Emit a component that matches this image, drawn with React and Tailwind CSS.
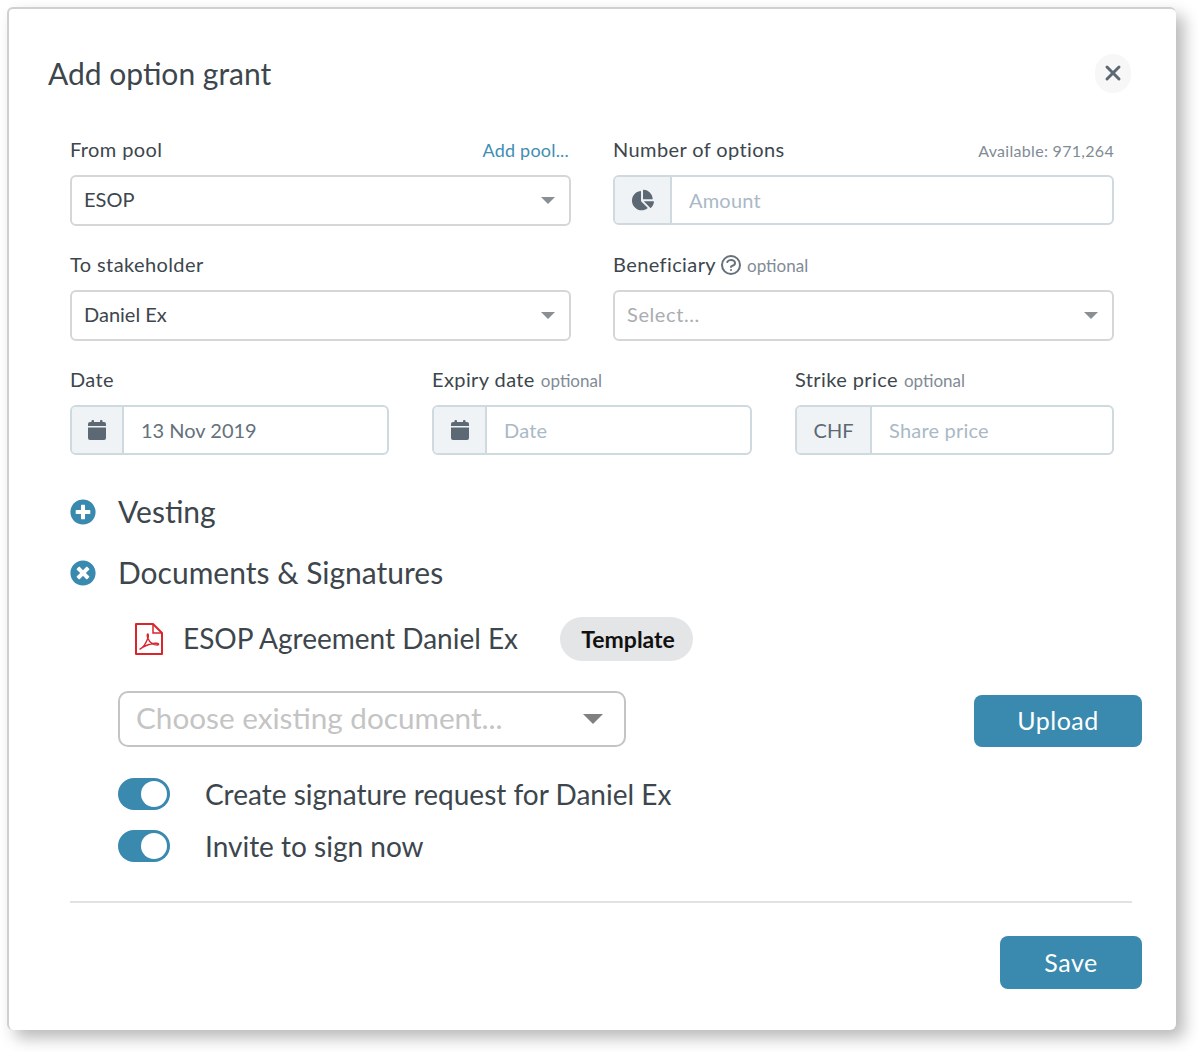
import { FaChartPie, FaPlusCircle, FaTimesCircle } from "react-icons/fa"
import { HiOutlineQuestionMarkCircle } from "react-icons/hi"
import { X } from "lucide-react"

const ui = "font-['Lato',sans-serif]"

function Caret({ big }) {
  return big ? (
    <span className="w-0 h-0 border-x-[10px] border-x-transparent border-t-[10px] border-t-[#808080]" />
  ) : (
    <span className="w-0 h-0 border-x-[7px] border-x-transparent border-t-[7px] border-t-[#8a8f94]" />
  )
}

function CalendarIcon() {
  return (
    <svg width="18" height="20" viewBox="0 0 18 20" fill="currentColor">
      <rect x="3.5" y="0" width="2.5" height="4" rx="1" />
      <rect x="12" y="0" width="2.5" height="4" rx="1" />
      <path d="M0 4a2 2 0 0 1 2-2h14a2 2 0 0 1 2 2v2H0zM0 7.5h18V18a2 2 0 0 1-2 2H2a2 2 0 0 1-2-2z" />
    </svg>
  )
}

function PdfIcon() {
  return (
    <svg width="28" height="32" viewBox="0 0 28 32" fill="none" stroke="#d9262c" strokeWidth="2" className="shrink-0">
      <path d="M1 1H18L27 10V31H1Z" strokeLinejoin="round" />
      <path d="M18 1V10H27" strokeWidth="1.5" />
      <path
        d="M5 26C8 25 11 20 13 15C13.5 13 13.5 11 12.8 11C12 11 12 13.5 13 15.5C14.5 19 18 22 22.5 22C24 22 24 20.5 22 20.3C18 20 10 22 5 26Z"
        strokeWidth="1.4"
        strokeLinejoin="round"
      />
    </svg>
  )
}

function Field({ label, extra, children }) {
  return (
    <div>
      <div className="flex items-baseline justify-between h-[24px] mb-[14px] text-[20px] tracking-[0.4px] leading-[24px] text-[#3d464d]">
        <div className="flex items-baseline">{label}</div>
        {extra}
      </div>
      {children}
    </div>
  )
}

function Optional({ tight }) {
  return <span className={`${tight ? "ml-[4px]" : "ml-[6px]"} text-[17px] tracking-normal text-[#7f8b96]`}>optional</span>
}

function SelectBox({ value, placeholder }) {
  return (
    <div className="flex items-center justify-between h-[51px] pl-[12px] pr-[14px] bg-white border-2 border-[#d4d6d8] rounded-[6px] text-[20px]">
      <span className={`pb-[3px] ${placeholder ? "text-[#a9adb1] tracking-[0.6px]" : "text-[#3d464d]"}`}>{value || placeholder}</span>
      <Caret />
    </div>
  )
}

function AddonInput({ addon, addonWidth, value, placeholder }) {
  return (
    <div className="flex h-[50px] bg-white border-2 border-[#cfd9e0] rounded-[6px] overflow-hidden text-[20px]">
      <div className={`flex items-center justify-center shrink-0 bg-[#f0f3f6] border-r-2 border-[#cfd9e0] text-[#5c6873] ${addonWidth}`}>
        {addon}
      </div>
      <div className={`flex items-center pl-[17px] ${placeholder ? "text-[#a9b9c6] tracking-[0.2px]" : "text-[#66717b]"}`}>
        {value || placeholder}
      </div>
    </div>
  )
}

function Toggle() {
  return (
    <div className="flex items-center justify-end w-[52px] h-[32px] pr-[3px] rounded-full bg-[#3a89ae]">
      <div className="w-[26px] h-[26px] rounded-full bg-white" />
    </div>
  )
}

export default function App() {
  return (
    <div className={`${ui} w-[1198px] h-[1052px] pt-[7px] pl-[7px] bg-white`}>
      <div className="w-[1169px] h-[1023px] bg-white border-2 border-[#d0d0d0] border-b-0 border-r-0 rounded-[6px] shadow-[8px_8px_16px_rgba(0,0,0,0.28)] pt-[44px] pl-[39px]">
        <div className="flex items-center justify-between pr-[45px] h-[40px]">
          <h1 className="text-[30px] leading-[40px] text-[#3d464d] font-normal">Add option grant</h1>
          <div className="flex items-center justify-center w-[36px] h-[39px] rounded-full bg-[#f7f7f7] text-[#5c6873]">
            <X size={24} strokeWidth={3} />
          </div>
        </div>

        <div className="pl-[22px] w-[1066px] pt-[44px]">
          <div className="grid grid-cols-[501px_501px] gap-x-[42px]">
            <Field
              label="From pool"
              extra={<span className="text-[18px] tracking-[0.2px] text-[#3f8eb3] pr-[2px]">Add pool...</span>}
            >
              <SelectBox value="ESOP" />
            </Field>
            <Field
              label="Number of options"
              extra={<span className="text-[16px] tracking-[0.3px] text-[#7f8b96]">Available: 971,264</span>}
            >
              <AddonInput addon={<FaChartPie size={22} />} addonWidth="w-[57px]" placeholder="Amount" />
            </Field>
          </div>

          <div className="grid grid-cols-[501px_501px] gap-x-[42px] mt-[26px]">
            <Field label="To stakeholder">
              <SelectBox value="Daniel Ex" />
            </Field>
            <Field
              label={
                <>
                  Beneficiary
                  <HiOutlineQuestionMarkCircle size={24} className="ml-[3px] self-center text-[#66717b]" />
                  <Optional tight />
                </>
              }
            >
              <SelectBox placeholder="Select..." />
            </Field>
          </div>

          <div className="grid grid-cols-[319px_320px_319px] gap-x-[43px] mt-[26px]">
            <Field label="Date">
              <AddonInput addon={<CalendarIcon />} addonWidth="w-[52px]" value="13 Nov 2019" />
            </Field>
            <Field label={<>Expiry date<Optional /></>}>
              <AddonInput addon={<CalendarIcon />} addonWidth="w-[53px]" placeholder="Date" />
            </Field>
            <Field label={<>Strike price<Optional /></>}>
              <AddonInput addon="CHF" addonWidth="w-[75px]" placeholder="Share price" />
            </Field>
          </div>

          <div className="flex items-center h-[40px] mt-[36px] text-[30px] text-[#3d464d]">
            <FaPlusCircle size={26} className="text-[#3a89ae] mt-[2px]" />
            <span className="ml-[22px]">Vesting</span>
          </div>
          <div className="flex items-center h-[40px] mt-[21px] text-[30px] text-[#3d464d]">
            <FaTimesCircle size={26} className="text-[#3a89ae] mt-[2px]" />
            <span className="ml-[22px]">Documents &amp; Signatures</span>
          </div>

          <div className="flex items-center h-[44px] mt-[25px] ml-[65px]">
            <PdfIcon />
            <span className="ml-[20px] pb-[2px] text-[28px] text-[#3d464d]">ESOP Agreement Daniel Ex</span>
            <span className="flex items-center justify-center ml-[42px] pl-[3px] w-[133px] h-[44px] rounded-full bg-[#e4e5e7] text-[23px] font-bold text-[#111]">
              Template
            </span>
          </div>

          <div className="flex items-start justify-between mt-[30px] ml-[48px] w-[1024px]">
            <div className="flex items-center justify-between w-[508px] h-[56px] pl-[16px] pr-[21px] border-2 border-[#c4c4c4] rounded-[10px]">
              <span className="pb-[2px] text-[29.7px] text-[#c4c4c4]">Choose existing document...</span>
              <Caret big />
            </div>
            <button className="mt-[4px] w-[168px] h-[52px] rounded-[8px] bg-[#3a89ae] text-white text-[25px] tracking-[0.5px]">
              Upload
            </button>
          </div>

          <div className="flex items-center h-[32px] mt-[31px] ml-[48px]">
            <Toggle />
            <span className="ml-[35px] text-[28px] text-[#3d464d]">Create signature request for Daniel Ex</span>
          </div>
          <div className="flex items-center h-[32px] mt-[20px] ml-[48px]">
            <Toggle />
            <span className="ml-[35px] text-[28px] text-[#3d464d]">Invite to sign now</span>
          </div>

          <div className="h-[2px] mt-[39px] bg-[#e2e2e2] w-[1062px]" />

          <div className="flex justify-end w-[1072px] mt-[33px]">
            <button className="w-[142px] h-[53px] rounded-[8px] bg-[#3a89ae] text-white text-[25px] tracking-[0.5px]">
              Save
            </button>
          </div>
        </div>
      </div>
    </div>
  )
}
